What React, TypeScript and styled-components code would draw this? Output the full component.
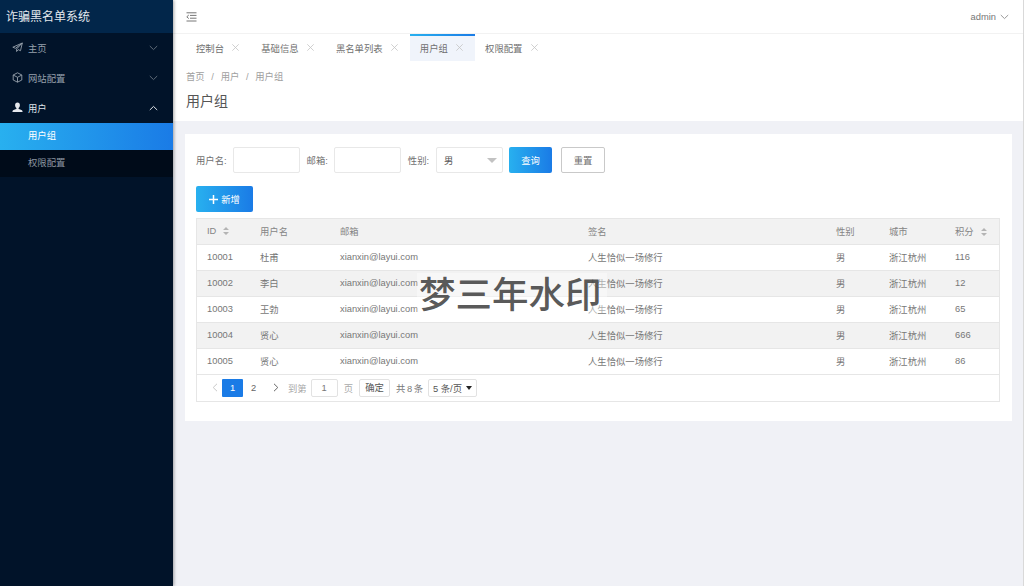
import React from "react";
import styled, { createGlobalStyle } from "styled-components";

const GRAD = "linear-gradient(90deg, #28b0ef 0%, #1a7be6 100%)";
const FONT = `"Liberation Sans", "Noto Sans CJK SC", sans-serif`;

const Global = createGlobalStyle`
  html, body { margin: 0; padding: 0; height: 100%; background: #f0f1f6; }
  body { font-family: ${FONT}; font-size: 9.33px; color: #666; overflow: hidden; }
  * { box-sizing: border-box; }
`;

const Shell = styled.div`
  display: flex;
  width: 1024px;
  height: 586px;
  position: relative;
`;

const Sidebar = styled.aside`
  width: 173px;
  flex: none;
  background: #011329;
  box-shadow: 1px 0 3px rgba(0, 0, 0, 0.35);
  display: flex;
  flex-direction: column;
  z-index: 1;
`;

const Logo = styled.div`
  height: 33px;
  background: #02264a;
  color: #e4e9ee;
  font-size: 12px;
  line-height: 34px;
  padding-left: 6px;
`;

const MenuItem = styled.div<{ $open?: boolean }>`
  height: 30px;
  display: flex;
  align-items: center;
  padding: 0 15px 1px 12px;
  gap: 5px;
  color: ${(p) => (p.$open ? "#dfe3e8" : "#97a1ad")};
  svg { flex: none; }
`;

const MenuLabel = styled.span`
  flex: 1;
`;

const SubItem = styled.div<{ $active?: boolean }>`
  height: 27px;
  line-height: 27px;
  padding-left: 28px;
  background: ${(p) => (p.$active ? GRAD : "#000b19")};
  color: ${(p) => (p.$active ? "#fff" : "#8d96a1")};
`;

const Main = styled.main`
  flex: 1;
  min-width: 0;
  display: flex;
  flex-direction: column;
  border-right: 1px solid #d9d9d9;
`;

const Header = styled.header`
  height: 34px;
  background: #fff;
  border-bottom: 1px solid #f2f2f2;
  display: flex;
  align-items: center;
  justify-content: space-between;
  padding: 0 14px 0 13px;
`;

const User = styled.div`
  display: flex;
  align-items: center;
  gap: 4px;
  color: #777;
`;

const Tabs = styled.nav`
  height: 28px;
  background: #fff;
  display: flex;
  padding-left: 13px;
  box-shadow: 0 1px 1px rgba(0, 0, 0, 0.05);
`;

const Tab = styled.div<{ $active?: boolean }>`
  height: 27px;
  padding: 0 12px 0 10px;
  display: flex;
  align-items: center;
  gap: 8.3px;
  color: #707070;
  position: relative;
  background: ${(p) => (p.$active ? "#f0f4fb" : "transparent")};
  &::before {
    content: "";
    display: ${(p) => (p.$active ? "block" : "none")};
    position: absolute;
    left: 0;
    right: 0;
    top: 0;
    height: 2px;
    background: ${GRAD};
  }
`;

const TitleBlock = styled.div`
  background: #fff;
  height: 59px;
  padding: 9px 13px 0;
`;

const Crumbs = styled.div`
  display: flex;
  gap: 6.7px;
  color: #a0a0a0;
  line-height: 12px;
  height: 12px;
`;

const PageTitle = styled.h1`
  margin: 8px 0 0;
  font-size: 14px;
  line-height: 20px;
  font-weight: 400;
  color: #555;
`;

const Content = styled.div`
  flex: 1;
  padding: 13px 11px 0 12px;
`;

const Card = styled.section`
  background: #fff;
  height: 287px;
  padding: 13px 12px 0 11px;
`;

const Filter = styled.div`
  display: flex;
  align-items: center;
  height: 26px;
`;

const FieldLabel = styled.label`
  color: #707070;
  margin-right: 6px;
`;

const Input = styled.div`
  width: 67px;
  height: 26px;
  border: 1px solid #e8e8e8;
  border-radius: 2px;
  margin-right: 7px;
  background: #fff;
`;

const SelectBox = styled(Input)`
  margin: 0 6px 0 1px;
  display: flex;
  align-items: center;
  justify-content: space-between;
  padding: 0 5px 0 7px;
  color: #555;
  &::after {
    content: "";
    border: 5px solid transparent;
    border-top: 5px solid #c2c2c2;
    border-bottom: 0;
  }
`;

const PrimaryBtn = styled.button`
  font: inherit;
  border: 0;
  border-radius: 2px;
  background: ${GRAD};
  color: #fff;
  padding: 0;
  display: flex;
  align-items: center;
  justify-content: center;
`;

const SearchBtn = styled(PrimaryBtn)`
  width: 43px;
  height: 26px;
  margin-right: 9px;
`;

const ResetBtn = styled.button`
  font: inherit;
  width: 44px;
  height: 26px;
  background: #fff;
  border: 1px solid #c9c9c9;
  border-radius: 2px;
  color: #707070;
  padding: 0;
`;

const AddBtn = styled(PrimaryBtn)`
  width: 57px;
  height: 26px;
  margin-top: 13px;
  gap: 3px;
`;

const TableWrap = styled.div`
  margin-top: 6px;
  border: 1px solid #e6e6e6;
  height: 184px;
  width: 804px;
`;

const Table = styled.table`
  width: 100%;
  border-collapse: collapse;
  table-layout: fixed;
`;

const Th = styled.th<{ $w: number }>`
  width: ${(p) => p.$w}px;
  height: 25px;
  padding: 0 0 0 10px;
  background: #f2f2f2;
  font-weight: 400;
  text-align: left;
  color: #858585;
  border-bottom: 1px solid #e6e6e6;
`;

const Tr = styled.tr<{ $alt: boolean }>`
  background: ${(p) => (p.$alt ? "#f2f2f2" : "#fff")};
`;

const Td = styled.td`
  height: 26px;
  padding: 0 0 0 10px;
  color: #777;
  border-bottom: 1px solid #e6e6e6;
`;

const SortWrap = styled.span`
  display: inline-flex;
  vertical-align: -1px;
  margin-left: 7px;
`;

const Pager = styled.div`
  height: 26px;
  display: flex;
  align-items: center;
  padding-left: 10px;
  color: #777;
`;

const PageArrow = styled.span`
  width: 15px;
  display: flex;
  justify-content: center;
`;

const NextArrow = styled(PageArrow)`
  margin: 0 5px 0 4px;
`;

const PageNum = styled.span<{ $active?: boolean }>`
  width: 21px;
  height: 18px;
  line-height: 18px;
  text-align: center;
  border-radius: 1px;
  background: ${(p) => (p.$active ? "#1a7be6" : "transparent")};
  color: ${(p) => (p.$active ? "#fff" : "#666")};
`;

const PagerMuted = styled.span`
  color: #aaa;
`;

const PageInput = styled.span`
  width: 27px;
  height: 18px;
  line-height: 16px;
  border: 1px solid #e2e2e2;
  border-radius: 2px;
  text-align: center;
  margin: 0 6px 0 4px;
`;

const ConfirmBtn = styled.span`
  width: 31px;
  height: 18px;
  line-height: 16px;
  text-align: center;
  border: 1px solid #e2e2e2;
  border-radius: 2px;
  color: #555;
  margin: 0 6px;
`;

const PageCount = styled.span`
  width: 32px;
  white-space: nowrap;
  word-spacing: -1px;
`;

const PageSize = styled.span`
  width: 49px;
  height: 18px;
  border: 1px solid #e2e2e2;
  border-radius: 2px;
  padding: 0 4px;
  display: flex;
  align-items: center;
  justify-content: space-between;
  color: #555;
  &::after {
    content: "";
    border: 3px solid transparent;
    border-top: 4px solid #222;
    border-bottom: 0;
  }
`;

const Watermark = styled.div`
  position: absolute;
  left: 417px;
  top: 273px;
  width: 190px;
  height: 40px;
  background: rgba(255, 255, 255, 0.4);
  color: rgba(60, 60, 60, 0.85);
  font-family: "Noto Sans CJK SC", sans-serif;
  font-size: 36.5px;
  font-weight: 500;
  line-height: 40px;
  white-space: nowrap;
  padding-left: 2px;
  z-index: 2;
`;

const Chevron = ({ up, color = "#5f6b78" }: { up?: boolean; color?: string }) => (
  <svg width="9" height="6" viewBox="0 0 9 6" fill="none" stroke={color} strokeWidth="1">
    <path d={up ? "M.8 5 4.500 1.400 8.200 5" : "M.8 1 4.500 4.600 8.200 1"} />
  </svg>
);

const Close = () => (
  <svg width="7" height="7" viewBox="0 0 7 7" stroke="#c4c4c4" strokeWidth="0.8">
    <path d="M.3.3l6.400 6.400M6.700.3.3 6.700" />
  </svg>
);

const Sort = () => (
  <SortWrap>
    <svg width="6" height="8" viewBox="0 0 6 8" fill="#b4b4b4">
      <path d="M3 0 6 3H0ZM3 8 0 5h6Z" />
    </svg>
  </SortWrap>
);

const columns: { label: string; w: number; sort?: boolean }[] = [
  { label: "ID", w: 53, sort: true },
  { label: "用户名", w: 80 },
  { label: "邮箱", w: 248 },
  { label: "签名", w: 248 },
  { label: "性别", w: 53 },
  { label: "城市", w: 66 },
  { label: "积分", w: 54, sort: true },
];

const rows = [
  ["10001", "杜甫", "116"],
  ["10002", "李白", "12"],
  ["10003", "王勃", "65"],
  ["10004", "贤心", "666"],
  ["10005", "贤心", "86"],
];

const tabs = ["控制台", "基础信息", "黑名单列表", "用户组", "权限配置"];

export default function App() {
  return (
    <Shell>
      <Global />
      <Sidebar>
        <Logo>诈骗黑名单系统</Logo>
        <MenuItem>
          <svg width="11" height="11" viewBox="0 0 11 11" fill="none" stroke="#97a1ad" strokeWidth="0.9">
            <path d="M10.300 1 .8 5.200l2.700 1.100L10.300 1 4.600 7v2.500l1.600-1.900 2.300 1.100Z" />
          </svg>
          <MenuLabel>主页</MenuLabel>
          <Chevron />
        </MenuItem>
        <MenuItem>
          <svg width="11" height="11" viewBox="0 0 11 11" fill="none" stroke="#97a1ad" strokeWidth="0.9">
            <path d="M5.500.8 9.800 3v5L5.500 10.200 1.200 8V3ZM1.200 3l4.300 2.300L9.800 3M5.500 5.300v4.900" />
          </svg>
          <MenuLabel>网站配置</MenuLabel>
          <Chevron />
        </MenuItem>
        <MenuItem $open>
          <svg width="11" height="11" viewBox="0 0 11 11" fill="#e6e9ee">
            <path d="M5.500.6c1.600 0 2.400 1.200 2.400 2.600 0 1.200-.6 2.300-1.300 2.900v.9c1 .4 3.600.8 3.900 2.100v.9H.5V9.100c.3-1.300 2.900-1.700 3.900-2.100v-.9C3.700 5.500 3.100 4.400 3.100 3.200 3.100 1.800 3.900.6 5.500.6Z" />
          </svg>
          <MenuLabel>用户</MenuLabel>
          <Chevron up color="#dfe3e8" />
        </MenuItem>
        <SubItem $active>用户组</SubItem>
        <SubItem>权限配置</SubItem>
      </Sidebar>
      <Main>
        <Header>
          <svg width="11" height="10" viewBox="0 0 11 10" fill="none" stroke="#666" strokeWidth="0.9">
            <path d="M.5.8h10M4 3.400h6.500M4 6.200h6.500M.5 9h10M2.800 3 .8 4.800l2 1.800" />
          </svg>
          <User>
            admin
            <Chevron color="#999" />
          </User>
        </Header>
        <Tabs>
          {tabs.map((t) => (
            <Tab key={t} $active={t === "用户组"}>
              {t}
              <Close />
            </Tab>
          ))}
        </Tabs>
        <TitleBlock>
          <Crumbs>
            <span>首页</span>
            <span>/</span>
            <span>用户</span>
            <span>/</span>
            <span>用户组</span>
          </Crumbs>
          <PageTitle>用户组</PageTitle>
        </TitleBlock>
        <Content>
          <Card>
            <Filter>
              <FieldLabel>用户名:</FieldLabel>
              <Input />
              <FieldLabel>邮箱:</FieldLabel>
              <Input />
              <FieldLabel>性别:</FieldLabel>
              <SelectBox>男</SelectBox>
              <SearchBtn>查询</SearchBtn>
              <ResetBtn>重置</ResetBtn>
            </Filter>
            <AddBtn>
              <svg width="9" height="9" viewBox="0 0 9 9" stroke="#fff" strokeWidth="1.5">
                <path d="M4.500 0v9M0 4.500h9" />
              </svg>
              新增
            </AddBtn>
            <TableWrap>
              <Table>
                <thead>
                  <tr>
                    {columns.map((c) => (
                      <Th key={c.label} $w={c.w}>
                        {c.label}
                        {c.sort && <Sort />}
                      </Th>
                    ))}
                  </tr>
                </thead>
                <tbody>
                  {rows.map((r, i) => (
                    <Tr key={r[0]} $alt={i % 2 === 1}>
                      <Td>{r[0]}</Td>
                      <Td>{r[1]}</Td>
                      <Td>xianxin@layui.com</Td>
                      <Td>人生恰似一场修行</Td>
                      <Td>男</Td>
                      <Td>浙江杭州</Td>
                      <Td>{r[2]}</Td>
                    </Tr>
                  ))}
                </tbody>
              </Table>
              <Pager>
                <PageArrow>
                  <svg width="6" height="9" viewBox="0 0 6 9" fill="none" stroke="#c8c8c8">
                    <path d="M5 .8 1.200 4.500 5 8.200" />
                  </svg>
                </PageArrow>
                <PageNum $active>1</PageNum>
                <PageNum>2</PageNum>
                <NextArrow>
                  <svg width="6" height="9" viewBox="0 0 6 9" fill="none" stroke="#666">
                    <path d="M1 .8 4.800 4.500 1 8.200" />
                  </svg>
                </NextArrow>
                <PagerMuted>到第</PagerMuted>
                <PageInput>1</PageInput>
                <PagerMuted>页</PagerMuted>
                <ConfirmBtn>确定</ConfirmBtn>
                <PageCount>共 8 条</PageCount>
                <PageSize>5 条/页</PageSize>
              </Pager>
            </TableWrap>
          </Card>
        </Content>
      </Main>
      <Watermark>梦三年水印</Watermark>
    </Shell>
  );
}
